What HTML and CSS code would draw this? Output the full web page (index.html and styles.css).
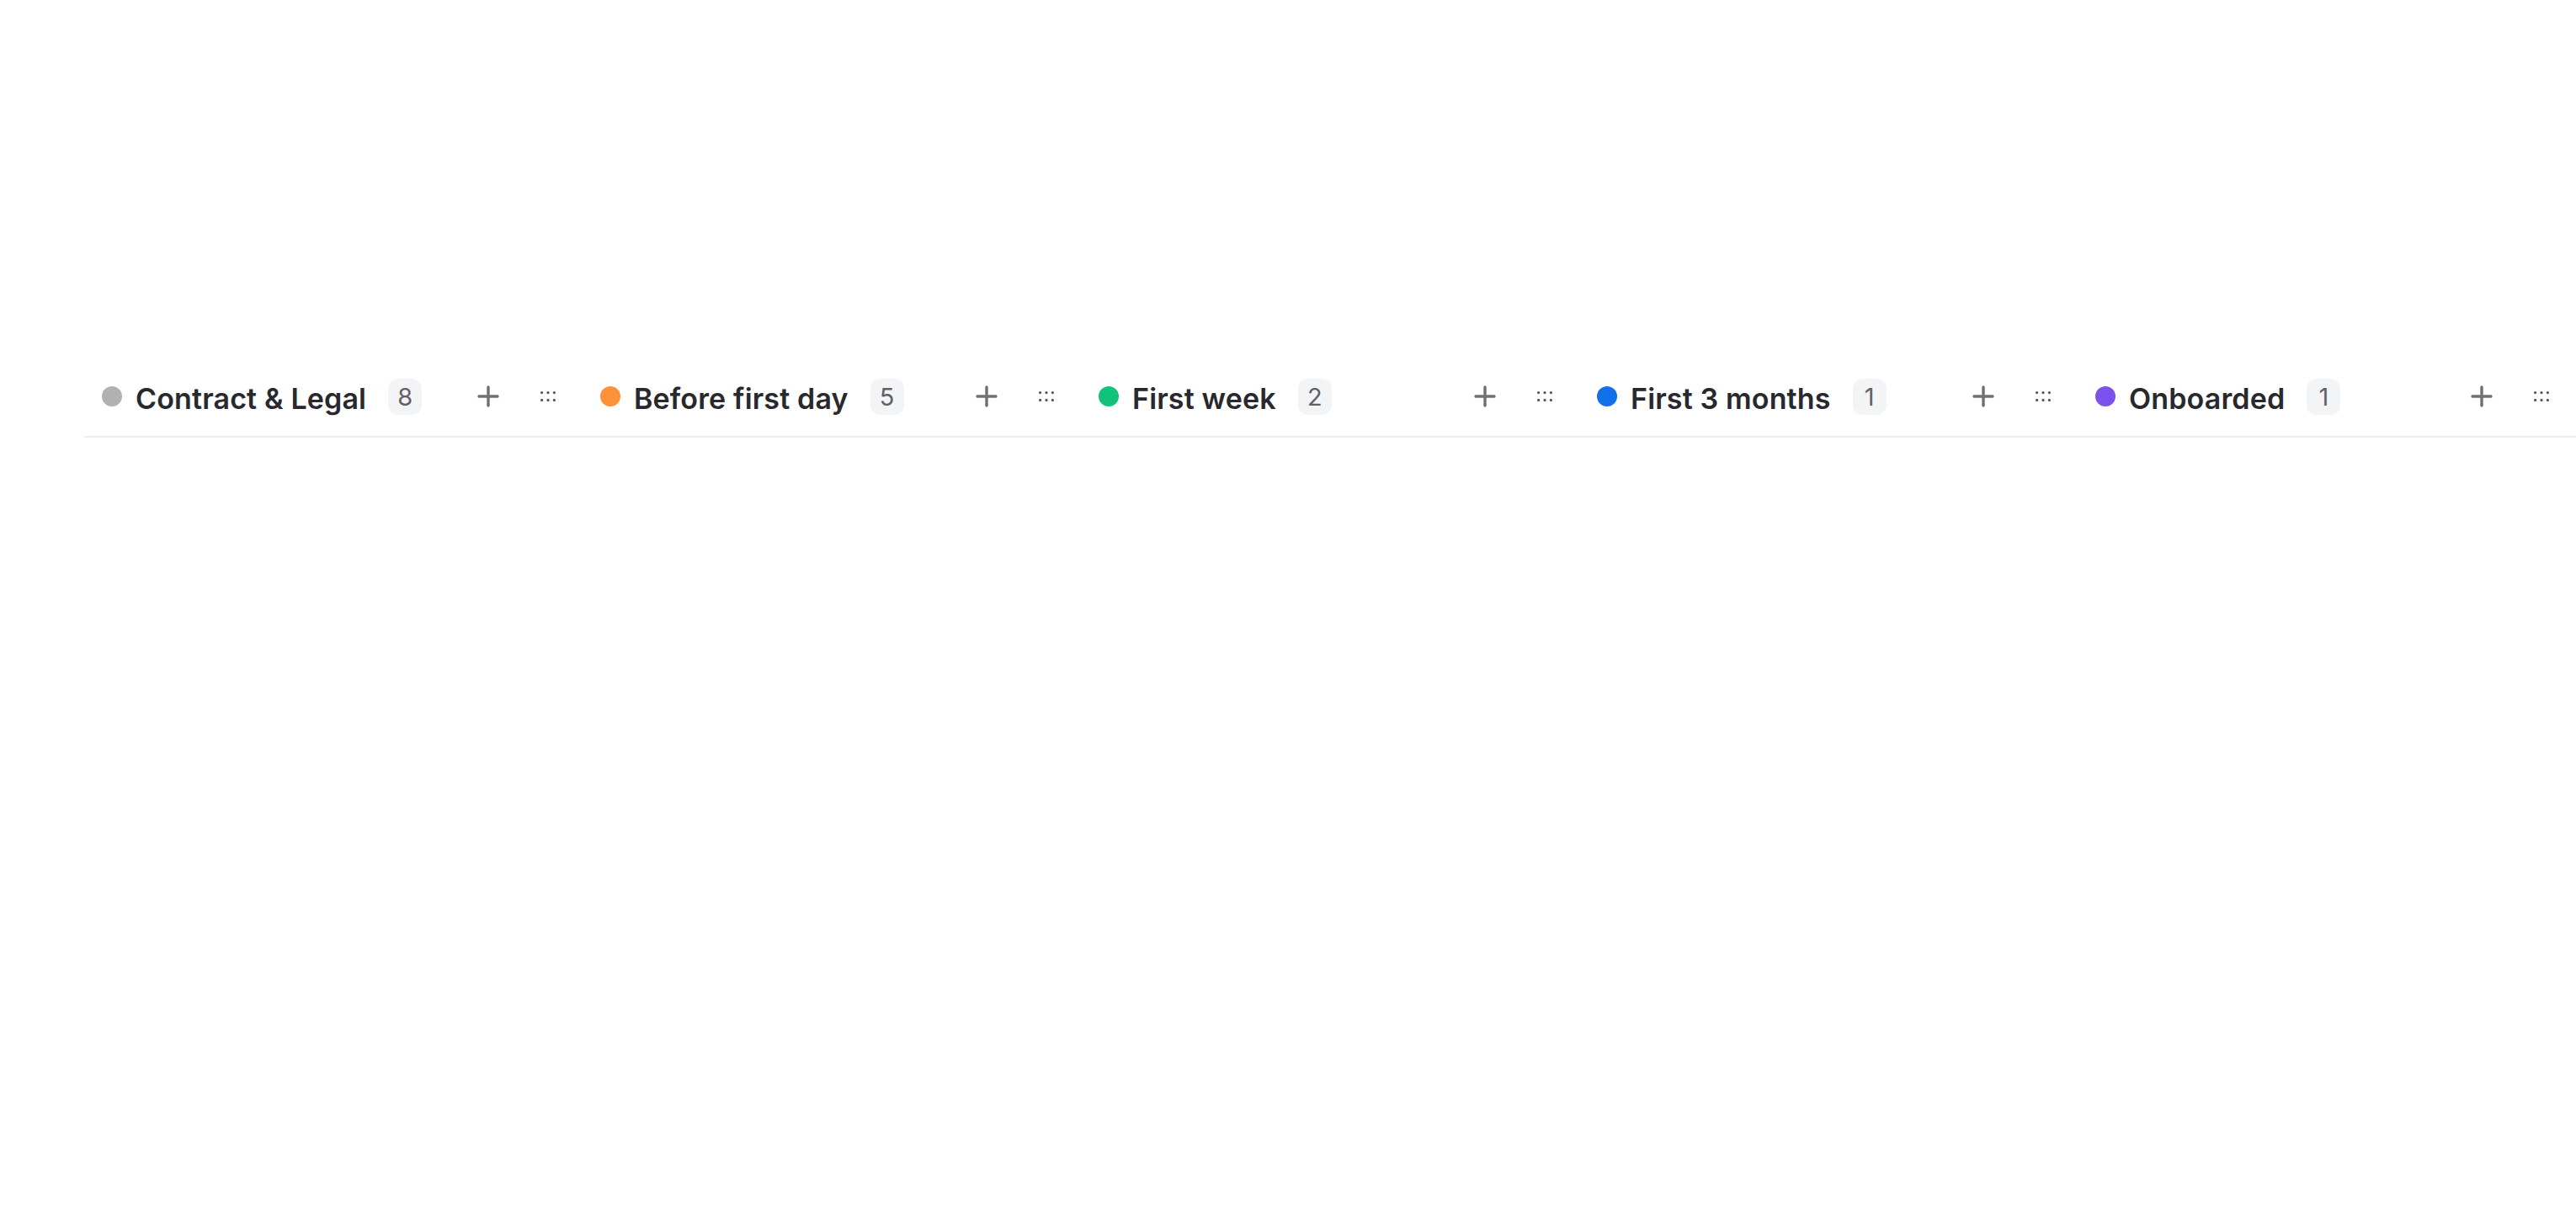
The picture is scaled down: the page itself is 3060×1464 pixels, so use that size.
FILE: index.html
```html
<!DOCTYPE html>
<html lang="en">
<head>
<meta charset="utf-8">
<title>Onboarding board</title>
<link rel="stylesheet" href="styles.css">
</head>
<body>
<div class="board">
  <div class="column">
    <div class="col-header">
      <span class="dot dot-gray"></span>
      <span class="title">Contract &amp; Legal</span>
      <span class="count">8</span>
      <span class="spacer"></span>
      <button class="icon-btn plus" aria-label="Add">
        <svg width="26" height="26" viewBox="0 0 26 26"><path d="M13 2v22M2 13h22" stroke="currentColor" stroke-width="3.4" stroke-linecap="round" fill="none"/></svg>
      </button>
      <button class="icon-btn grip" aria-label="Reorder">
        <svg width="18" height="12" viewBox="0 0 18 12"><g fill="currentColor"><circle cx="1.6" cy="1.6" r="1.6"/><circle cx="9" cy="1.6" r="1.6"/><circle cx="16.4" cy="1.6" r="1.6"/><circle cx="1.6" cy="10.4" r="1.6"/><circle cx="9" cy="10.4" r="1.6"/><circle cx="16.4" cy="10.4" r="1.6"/></g></svg>
      </button>
    </div>
  </div>
  <div class="column">
    <div class="col-header">
      <span class="dot dot-orange"></span>
      <span class="title">Before first day</span>
      <span class="count">5</span>
      <span class="spacer"></span>
      <button class="icon-btn plus" aria-label="Add">
        <svg width="26" height="26" viewBox="0 0 26 26"><path d="M13 2v22M2 13h22" stroke="currentColor" stroke-width="3.4" stroke-linecap="round" fill="none"/></svg>
      </button>
      <button class="icon-btn grip" aria-label="Reorder">
        <svg width="18" height="12" viewBox="0 0 18 12"><g fill="currentColor"><circle cx="1.6" cy="1.6" r="1.6"/><circle cx="9" cy="1.6" r="1.6"/><circle cx="16.4" cy="1.6" r="1.6"/><circle cx="1.6" cy="10.4" r="1.6"/><circle cx="9" cy="10.4" r="1.6"/><circle cx="16.4" cy="10.4" r="1.6"/></g></svg>
      </button>
    </div>
  </div>
  <div class="column">
    <div class="col-header">
      <span class="dot dot-green"></span>
      <span class="title">First week</span>
      <span class="count">2</span>
      <span class="spacer"></span>
      <button class="icon-btn plus" aria-label="Add">
        <svg width="26" height="26" viewBox="0 0 26 26"><path d="M13 2v22M2 13h22" stroke="currentColor" stroke-width="3.4" stroke-linecap="round" fill="none"/></svg>
      </button>
      <button class="icon-btn grip" aria-label="Reorder">
        <svg width="18" height="12" viewBox="0 0 18 12"><g fill="currentColor"><circle cx="1.6" cy="1.6" r="1.6"/><circle cx="9" cy="1.6" r="1.6"/><circle cx="16.4" cy="1.6" r="1.6"/><circle cx="1.6" cy="10.4" r="1.6"/><circle cx="9" cy="10.4" r="1.6"/><circle cx="16.4" cy="10.4" r="1.6"/></g></svg>
      </button>
    </div>
  </div>
  <div class="column">
    <div class="col-header">
      <span class="dot dot-blue"></span>
      <span class="title">First 3 months</span>
      <span class="count">1</span>
      <span class="spacer"></span>
      <button class="icon-btn plus" aria-label="Add">
        <svg width="26" height="26" viewBox="0 0 26 26"><path d="M13 2v22M2 13h22" stroke="currentColor" stroke-width="3.4" stroke-linecap="round" fill="none"/></svg>
      </button>
      <button class="icon-btn grip" aria-label="Reorder">
        <svg width="18" height="12" viewBox="0 0 18 12"><g fill="currentColor"><circle cx="1.6" cy="1.6" r="1.6"/><circle cx="9" cy="1.6" r="1.6"/><circle cx="16.4" cy="1.6" r="1.6"/><circle cx="1.6" cy="10.4" r="1.6"/><circle cx="9" cy="10.4" r="1.6"/><circle cx="16.4" cy="10.4" r="1.6"/></g></svg>
      </button>
    </div>
  </div>
  <div class="column">
    <div class="col-header">
      <span class="dot dot-purple"></span>
      <span class="title">Onboarded</span>
      <span class="count">1</span>
      <span class="spacer"></span>
      <button class="icon-btn plus" aria-label="Add">
        <svg width="26" height="26" viewBox="0 0 26 26"><path d="M13 2v22M2 13h22" stroke="currentColor" stroke-width="3.4" stroke-linecap="round" fill="none"/></svg>
      </button>
      <button class="icon-btn grip" aria-label="Reorder">
        <svg width="18" height="12" viewBox="0 0 18 12"><g fill="currentColor"><circle cx="1.6" cy="1.6" r="1.6"/><circle cx="9" cy="1.6" r="1.6"/><circle cx="16.4" cy="1.6" r="1.6"/><circle cx="1.6" cy="10.4" r="1.6"/><circle cx="9" cy="10.4" r="1.6"/><circle cx="16.4" cy="10.4" r="1.6"/></g></svg>
      </button>
    </div>
  </div>
</div>
</body>
</html>
```
FILE: styles.css
```css
html, body {
  margin: 0;
  padding: 0;
  background: #ffffff;
}
body {
  font-family: Inter, "Noto Sans", "Liberation Sans", sans-serif;
  color: #2a2a2f;
  overflow: hidden;
}
.board {
  display: flex;
  padding-top: 424px;
  padding-left: 100px;
}
.column {
  flex: 0 0 592px;
  width: 592px;
}
.col-header {
  display: flex;
  align-items: center;
  height: 94px;
  padding: 0 32px 0 21px;
  border-bottom: 2px solid #ededed;
}
.dot {
  flex: 0 0 24px;
  width: 24px;
  height: 24px;
  border-radius: 50%;
  margin-right: 16px;
}
.dot-gray { background: #b1b1b1; }
.dot-orange { background: #ff9238; }
.dot-green { background: #12c27b; }
.dot-blue { background: #1270e8; }
.dot-purple { background: #7b52ec; }
.title {
  font-size: 34px;
  font-weight: 600;
  letter-spacing: 0.15px;
  white-space: nowrap;
  color: #28282d;
  position: relative;
  top: 2px;
}
.count {
  margin-left: 26px;
  min-width: 40px;
  height: 43px;
  box-sizing: border-box;
  padding: 0 9px;
  display: inline-flex;
  align-items: center;
  justify-content: center;
  background: #f3f4f6;
  border-radius: 12px;
  font-size: 29px;
  font-weight: 400;
  color: #606066;
}
.spacer {
  flex: 1 1 auto;
}
.icon-btn {
  display: inline-flex;
  align-items: center;
  justify-content: center;
  background: none;
  border: 0;
  padding: 0;
  margin: 0;
  color: #707070;
}
.plus {
  width: 26px;
  height: 26px;
}
.grip {
  margin-left: 49px;
  width: 18px;
  height: 12px;
  color: #555555;
}
```
